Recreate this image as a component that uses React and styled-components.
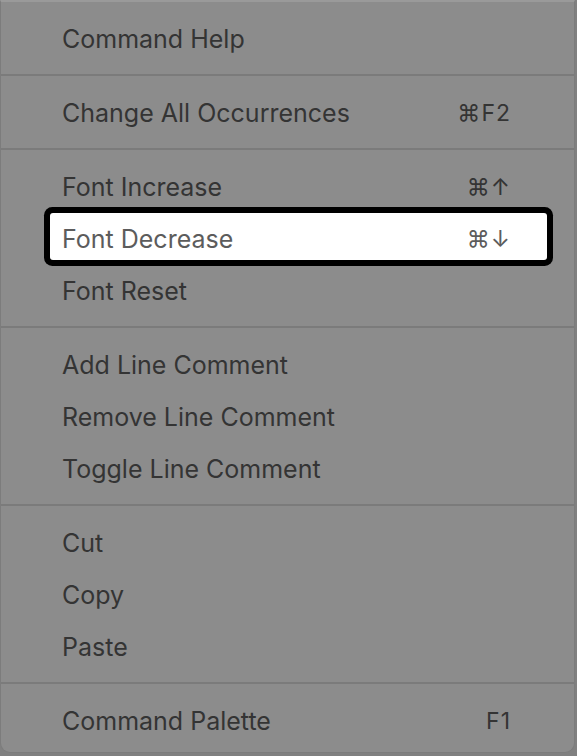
import React from "react";
import styled, { createGlobalStyle } from "styled-components";

const GlobalStyle = createGlobalStyle`
  html, body {
    margin: 0;
    padding: 0;
    background: #808080;
  }
  body {
    font-family: "Inter", "Liberation Sans", sans-serif;
  }
`;

const Menu = styled.div`
  box-sizing: border-box;
  width: 575px;
  height: 753px;
  background: #8c8c8c;
  border: 1px solid #7c7c7c;
  border-top: 2px solid #9a9a9a;
  border-radius: 0 0 10px 10px;
  display: flex;
  flex-direction: column;
  overflow: hidden;
`;

const Section = styled.div`
  display: flex;
  flex-direction: column;
  padding: 11px 0 9px;
  border-bottom: ${(p) => (p.$last ? "none" : "2px solid #7b7b7b")};
`;

const Row = styled.div`
  box-sizing: border-box;
  height: ${(p) => (p.$active ? "47px" : "52px")};
  margin: 0 27px ${(p) => (p.$active ? "5px" : "0")} 49px;
  padding: ${(p) => (p.$active ? "5px 36px 0 12px" : "0 36px 0 12px")};
  display: flex;
  align-items: center;
  justify-content: space-between;
  font-size: 25px;
  color: ${(p) => (p.$active ? "#5c5c5c" : "#343434")};
  background: ${(p) => (p.$active ? "#ffffff" : "transparent")};
  border-radius: ${(p) => (p.$active ? "3px" : "0")};
  box-shadow: ${(p) => (p.$active ? "0 0 0 6px #000" : "none")};
`;

const Label = styled.span``;

const Keys = styled.span`
  font-family: "Inter", "DejaVu Sans", sans-serif;
  font-size: 23px;
  letter-spacing: 1px;
`;

const sections = [
  [{ label: "Command Help" }],
  [{ label: "Change All Occurrences", keys: "⌘F2" }],
  [
    { label: "Font Increase", keys: "⌘↑" },
    { label: "Font Decrease", keys: "⌘↓", active: true },
    { label: "Font Reset" },
  ],
  [
    { label: "Add Line Comment" },
    { label: "Remove Line Comment" },
    { label: "Toggle Line Comment" },
  ],
  [{ label: "Cut" }, { label: "Copy" }, { label: "Paste" }],
  [{ label: "Command Palette", keys: "F1" }],
];

export default function App() {
  return (
    <>
      <GlobalStyle />
      <Menu>
        {sections.map((items, i) => (
          <Section key={i} $last={i === sections.length - 1}>
            {items.map((item) => (
              <Row key={item.label} $active={item.active}>
                <Label>{item.label}</Label>
                {item.keys && <Keys>{item.keys}</Keys>}
              </Row>
            ))}
          </Section>
        ))}
      </Menu>
    </>
  );
}
